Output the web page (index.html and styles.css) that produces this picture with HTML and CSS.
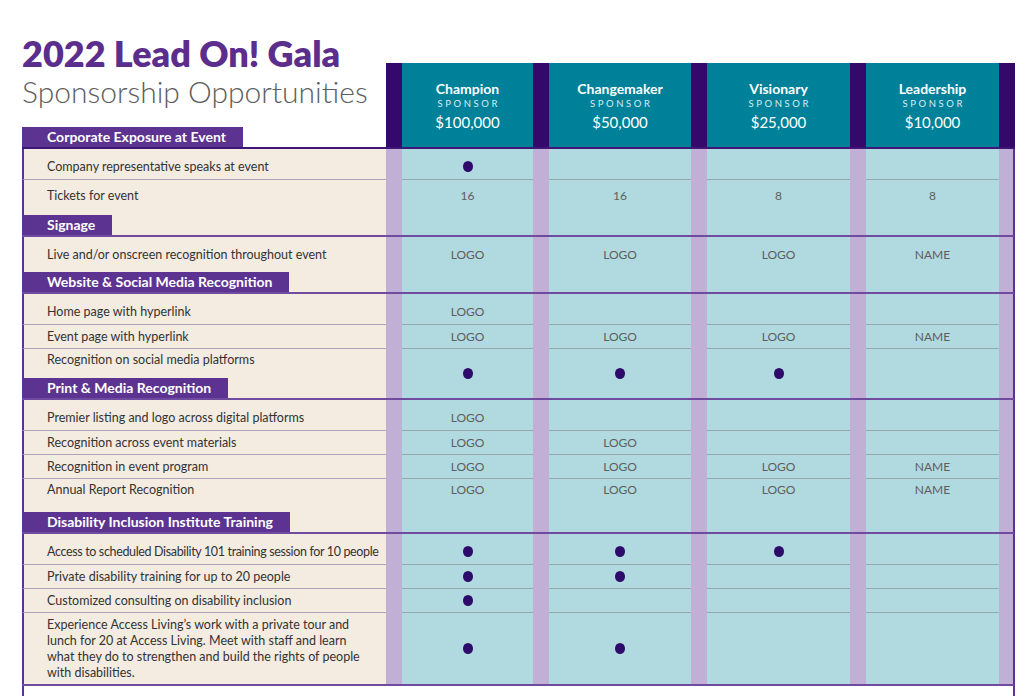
FILE: index.html
```html
<!DOCTYPE html>
<html lang="en">
<head>
<meta charset="utf-8">
<title>2022 Lead On! Gala – Sponsorship Opportunities</title>
<link rel="stylesheet" href="styles.css">
</head>
<body>
<div class="page">
  <div class="top">
    <div class="intro">
      <h1 class="title">2022 Lead On! Gala</h1>
      <p class="subtitle">Sponsorship Opportunities</p>
      <div class="label">Corporate Exposure at Event</div>
    </div>
    <div class="tiers">
      <div class="tier"><div class="tier-name">Champion</div><div class="tier-kind">SPONSOR</div><div class="tier-price">$100,000</div></div>
      <div class="tier"><div class="tier-name">Changemaker</div><div class="tier-kind">SPONSOR</div><div class="tier-price">$50,000</div></div>
      <div class="tier"><div class="tier-name">Visionary</div><div class="tier-kind">SPONSOR</div><div class="tier-price">$25,000</div></div>
      <div class="tier"><div class="tier-name">Leadership</div><div class="tier-kind">SPONSOR</div><div class="tier-price">$10,000</div></div>
    </div>
  </div>

  <div class="matrix">
    <div class="row first">
      <div class="item"><span class="text">Company representative speaks at event</span></div>
      <div class="val"><span class="dot"></span></div><div class="val"></div><div class="val"></div><div class="val"></div>
    </div>
    <div class="row end">
      <div class="item"><span class="text">Tickets for event</span><div class="label">Signage</div></div>
      <div class="val">16</div><div class="val">16</div><div class="val">8</div><div class="val">8</div>
    </div>
    <div class="row end deep">
      <div class="item"><span class="text">Live and/or onscreen recognition throughout event</span><div class="label">Website &amp; Social Media Recognition</div></div>
      <div class="val">LOGO</div><div class="val">LOGO</div><div class="val">LOGO</div><div class="val">NAME</div>
    </div>
    <div class="row first">
      <div class="item"><span class="text">Home page with hyperlink</span></div>
      <div class="val">LOGO</div><div class="val"></div><div class="val"></div><div class="val"></div>
    </div>
    <div class="row">
      <div class="item"><span class="text">Event page with hyperlink</span></div>
      <div class="val">LOGO</div><div class="val">LOGO</div><div class="val">LOGO</div><div class="val">NAME</div>
    </div>
    <div class="row end tight mid">
      <div class="item"><span class="text">Recognition on social media platforms</span><div class="label">Print &amp; Media Recognition</div></div>
      <div class="val"><span class="dot"></span></div><div class="val"><span class="dot"></span></div><div class="val"><span class="dot"></span></div><div class="val"></div>
    </div>
    <div class="row first">
      <div class="item"><span class="text">Premier listing and logo across digital platforms</span></div>
      <div class="val">LOGO</div><div class="val"></div><div class="val"></div><div class="val"></div>
    </div>
    <div class="row">
      <div class="item"><span class="text">Recognition across event materials</span></div>
      <div class="val">LOGO</div><div class="val">LOGO</div><div class="val"></div><div class="val"></div>
    </div>
    <div class="row">
      <div class="item"><span class="text">Recognition in event program</span></div>
      <div class="val">LOGO</div><div class="val">LOGO</div><div class="val">LOGO</div><div class="val">NAME</div>
    </div>
    <div class="row end loose">
      <div class="item"><span class="text">Annual Report Recognition</span><div class="label">Disability Inclusion Institute Training</div></div>
      <div class="val">LOGO</div><div class="val">LOGO</div><div class="val">LOGO</div><div class="val">NAME</div>
    </div>
    <div class="row first">
      <div class="item"><span class="text snug">Access to scheduled Disability 101 training session for 10 people</span></div>
      <div class="val"><span class="dot"></span></div><div class="val"><span class="dot"></span></div><div class="val"><span class="dot"></span></div><div class="val"></div>
    </div>
    <div class="row">
      <div class="item"><span class="text">Private disability training for up to 20 people</span></div>
      <div class="val"><span class="dot"></span></div><div class="val"><span class="dot"></span></div><div class="val"></div><div class="val"></div>
    </div>
    <div class="row">
      <div class="item"><span class="text">Customized consulting on disability inclusion</span></div>
      <div class="val"><span class="dot"></span></div><div class="val"></div><div class="val"></div><div class="val"></div>
    </div>
    <div class="row last mid">
      <div class="item"><span class="text">Experience Access Living’s work with a private tour and<br>lunch for 20 at Access Living. Meet with staff and learn<br>what they do to strengthen and build the rights of people<br>with disabilities.</span></div>
      <div class="val"><span class="dot"></span></div><div class="val"><span class="dot"></span></div><div class="val"></div><div class="val"></div>
    </div>
    <div class="tail"></div>
  </div>
</div>
</body>
</html>
```

FILE: styles.css
```css
* { box-sizing: border-box; }

html, body {
  margin: 0;
  padding: 0;
  background: #ffffff;
}

body {
  font-family: Lato, "Noto Sans", "DejaVu Sans", sans-serif;
  color: #333333;
  overflow: hidden;
}

.page {
  padding-left: 22px;
  width: 1015px;
}

/* ---------- top area ---------- */
.top {
  display: flex;
  align-items: flex-end;
}

.intro {
  width: 364px;
  padding-top: 35px;
}

.title {
  margin: 0;
  font-size: 36px;
  line-height: 36px;
  font-weight: 800;
  color: #5b2d8c;
  white-space: nowrap;
}

.subtitle {
  margin: 5px 0 0;
  font-size: 30px;
  line-height: 30px;
  font-weight: 300;
  color: #5d5d5d;
  white-space: nowrap;
}

.label {
  display: inline-block;
  background: #5d3391;
  color: #ffffff;
  font-size: 14px;
  line-height: 20px;
  font-weight: 700;
  padding: 0 17px 0 25px;
  white-space: nowrap;
}

.intro .label {
  margin-top: 21px;
}

.tiers {
  width: 629px;
  height: 84px;
  display: grid;
  grid-template-columns: 131px 142px 143px 133px;
  column-gap: 16px;
  padding: 0 16px;
  background: #35096c;
}

.tier {
  background: #00819a;
  color: #ffffff;
  text-align: center;
  padding-top: 18px;
}

.tier-name {
  font-size: 14px;
  line-height: 16px;
  font-weight: 700;
}

.tier-kind {
  font-size: 9.5px;
  line-height: 14px;
  letter-spacing: 2.6px;
  padding-left: 2.6px;
  color: #d9eef2;
}

.tier-price {
  font-size: 15px;
  line-height: 22px;
}

/* ---------- matrix ---------- */
.matrix {
  width: 993px;
  border-top: 2px solid #3e1676;
}

.row {
  display: grid;
  grid-template-columns: 364px 131px 142px 143px 133px;
  column-gap: 16px;
  padding-right: 14px;
  border-right: 2px solid #5d3391;
  background: #c1afd5;
  font-size: 12.5px;
  line-height: 16px;
}

.row > * {
  padding-top: 4px;
  padding-bottom: 3px;
}

.row.first > * {
  padding-top: 10px;
  padding-bottom: 4px;
}

.item {
  background: #f4ebe1;
  border-left: 2px solid #5d3391;
  border-bottom: 1px solid #aea4b8;
  padding-left: 23px;
  padding-right: 0;
  color: #333333;
  white-space: nowrap;
}

.snug {
  letter-spacing: -0.35px;
}

.val {
  background: #b1d9e0;
  border-bottom: 1px solid #94a9ad;
  display: flex;
  justify-content: center;
  align-items: flex-start;
  color: #5e5e5e;
  font-size: 12px;
}

.dot {
  display: inline-block;
  width: 10px;
  height: 11px;
  margin-top: 2px;
  border-radius: 50%;
  background: #2e0a6b;
}

/* a row followed by a section label */
.row.end {
  border-bottom: 2px solid #6f4c9f;
}

.row.end > * {
  border-bottom: 0;
  padding-top: 8px;
  padding-bottom: 0;
}

.row.end.deep > * {
  padding-top: 10px;
}

.row.end.tight > *,
.row.end.loose > * {
  padding-top: 3px;
}

.row.end .label {
  margin-top: 11px;
  margin-left: -25px;
}

.row.end .item {
  display: flex;
  flex-direction: column;
  align-items: flex-start;
}

.row.end.deep .label {
  margin-top: 9px;
}

.row.end.tight .label {
  margin-top: 10px;
}

.row.end.loose .label {
  margin-top: 14px;
}

.row.mid .val {
  align-items: center;
  padding-top: 0;
  padding-bottom: 0;
}

.row.mid .dot {
  margin-top: 0;
}

.row.last {
  border-bottom: 2px solid #6f4c9f;
}

.row.last > * {
  border-bottom: 0;
  padding-top: 4px;
  padding-bottom: 3px;
}

.tail {
  height: 12px;
  border-left: 2px solid #5d3391;
  border-right: 2px solid #5d3391;
}
```
